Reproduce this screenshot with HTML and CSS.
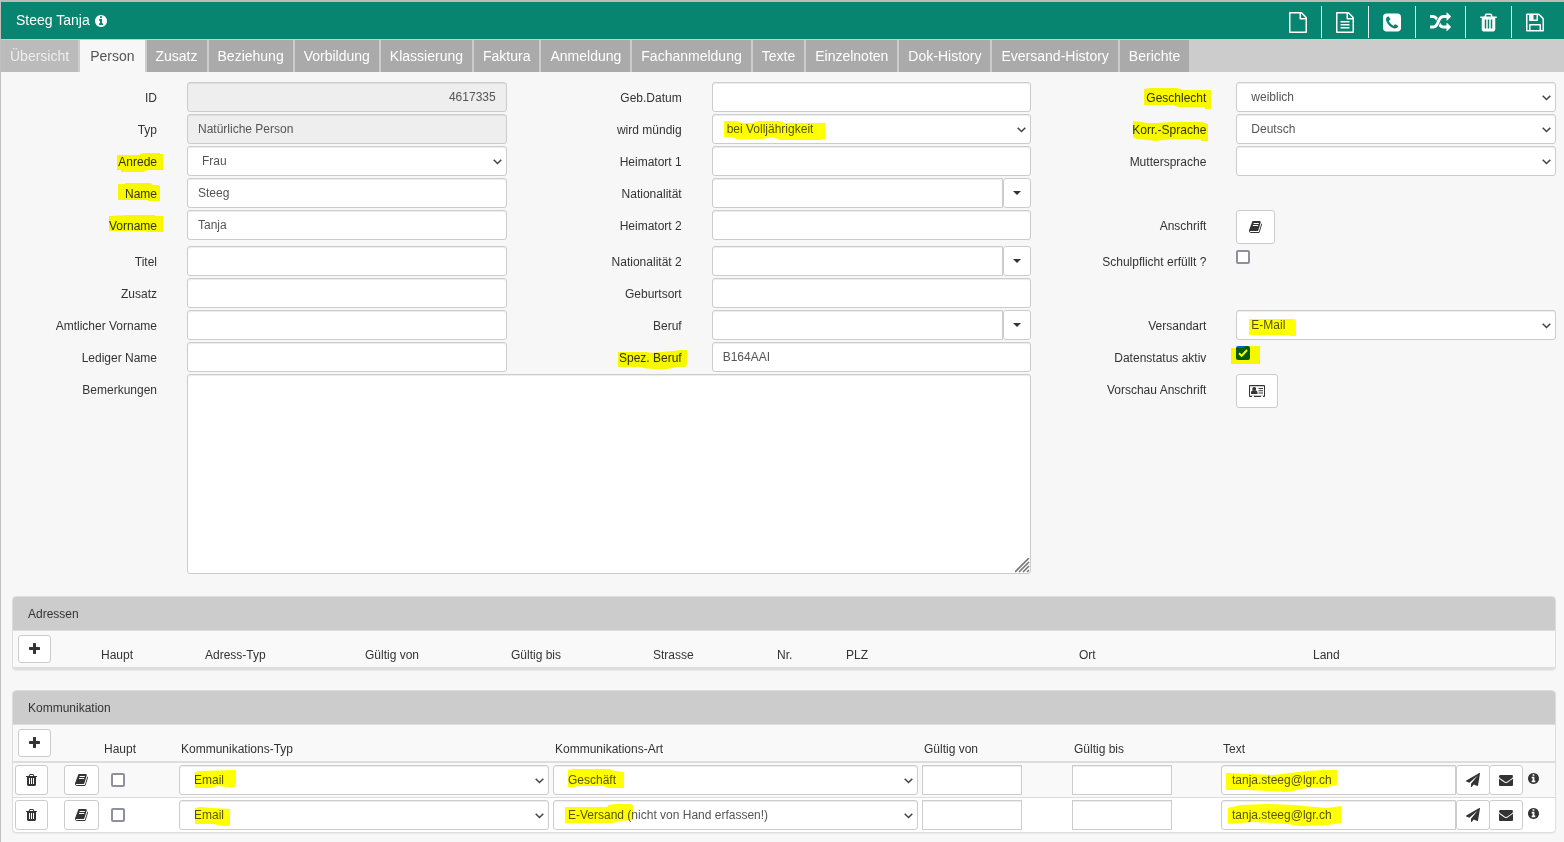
FILE: index.html
```html
<!DOCTYPE html>
<html lang="de">
<head>
    <meta charset="UTF-8">
    <meta name="viewport" content="width=device-width, initial-scale=1.0">
    <title>Steeg Tanja</title>
    <link rel="stylesheet" href="styles.css">
</head>
<body>

    <!-- Icon sprite -->
    <svg class="sprite" aria-hidden="true">
        <symbol id="i-file" viewBox="128 0 1536 1792"><path d="M1596 380q28 28 48 76t20 88v1152q0 40-28 68t-68 28h-1344q-40 0-68-28t-28-68v-1600q0-40 28-68t68-28h896q40 0 88 20t76 48zm-444-244v376h376q-10-29-22-41l-313-313q-12-12-41-22zm384 1528v-1024h-416q-40 0-68-28t-28-68v-416h-768v1536h1280z"/></symbol>
        <symbol id="i-file-text" viewBox="128 0 1536 1792"><path d="M1596 380q28 28 48 76t20 88v1152q0 40-28 68t-68 28h-1344q-40 0-68-28t-28-68v-1600q0-40 28-68t68-28h896q40 0 88 20t76 48zm-444-244v376h376q-10-29-22-41l-313-313q-12-12-41-22zm384 1528v-1024h-416q-40 0-68-28t-28-68v-416h-768v1536h1280zm-1024-864q0-14 9-23t23-9h704q14 0 23 9t9 23v64q0 14-9 23t-23 9h-704q-14 0-23-9t-9-23v-64zm736 224q14 0 23 9t9 23v64q0 14-9 23t-23 9h-704q-14 0-23-9t-9-23v-64q0-14 9-23t23-9h704zm0 256q14 0 23 9t9 23v64q0 14-9 23t-23 9h-704q-14 0-23-9t-9-23v-64q0-14 9-23t23-9h704z"/></symbol>
        <symbol id="i-phone" viewBox="128 0 1536 1792"><path d="M1408 1193q0-11-2-16t-18-16.5-40.5-25-47.5-26.5-45.5-25-28.5-15q-5-3-19-13t-25-15-21-5q-15 0-36.5 20.5t-39.5 45-38.5 45-33.5 20.5q-7 0-16.5-3.5t-15.5-6.5-17-9.5-14-8.5q-99-55-170-126.5t-127-170.5q-2-3-8.5-14t-9.5-17-6.5-15.5-3.5-16.5q0-13 20.5-33.5t45-38.5 45-39.5 20.5-36.5q0-10-5-21t-15-25-13-19q-3-6-15-28.5t-25-45.5-26.5-47.5-25-40.5-16.5-18-16-2q-48 0-101 22-46 21-80 94.5t-34 130.5q0 16 2.5 34t5 30.5 9 33 10 29.5 12.5 33 11 30q60 164 216.5 320.5t320.5 216.5q6 2 30 11t33 12.5 29.5 10 33 9 30.5 5 34 2.5q57 0 130.5-34t94.5-80q22-53 22-101zm256-777v960q0 119-84.5 203.5t-203.5 84.5h-960q-119 0-203.5-84.5t-84.5-203.5v-960q0-119 84.5-203.5t203.5-84.5h960q119 0 203.5 84.5t84.5 203.5z"/></symbol>
        <symbol id="i-random" viewBox="0 0 1792 1792"><path d="M666 481q-60 92-137 273-22-45-37-72.5t-40.5-63.5-51-56.5-63-35-81.5-14.5h-224q-14 0-23-9t-9-23v-192q0-14 9-23t23-9h224q250 0 410 225zm1126 799q0 14-9 23l-320 320q-9 9-23 9-13 0-22.5-9.5t-9.5-22.5v-192q-32 0-85 .5t-81 1-73-1-71-5-64-10.5-63-18.5-58-28.5-59-40-55-53.5-56-69.5q59-93 136-273 22 45 37 72.5t40.5 63.5 51 56.5 63 35 81.5 14.5h256v-192q0-14 9-23t23-9q12 0 24 10l319 319q9 9 9 23zm0-896q0 14-9 23l-320 320q-9 9-23 9-13 0-22.5-9.5t-9.5-22.5v-192h-256q-48 0-87 15t-69 45-51 61.5-45 77.5q-32 62-78 171-29 66-49.5 111t-54 105-64 100-74 83-90 68.5-106.5 42-128 16.5h-224q-14 0-23-9t-9-23v-192q0-14 9-23t23-9h224q48 0 87-15t69-45 51-61.5 45-77.5q32-62 78-171 29-66 49.5-111t54-105 64-100 74-83 90-68.5 106.5-42 128-16.5h256v-192q0-14 9-23t23-9q12 0 24 10l319 319q9 9 9 23z"/></symbol>
        <symbol id="i-trash" viewBox="192 0 1408 1792"><path d="M704 1376v-704q0-14-9-23t-23-9h-64q-14 0-23 9t-9 23v704q0 14 9 23t23 9h64q14 0 23-9t9-23zm256 0v-704q0-14-9-23t-23-9h-64q-14 0-23 9t-9 23v704q0 14 9 23t23 9h64q14 0 23-9t9-23zm256 0v-704q0-14-9-23t-23-9h-64q-14 0-23 9t-9 23v704q0 14 9 23t23 9h64q14 0 23-9t9-23zm-544-992h448l-48-117q-7-9-17-11h-317q-10 2-17 11zm928 32v64q0 14-9 23t-23 9h-96v948q0 83-47 143.5t-113 60.5h-832q-66 0-113-58.5t-47-141.5v-952h-96q-14 0-23-9t-9-23v-64q0-14 9-23t23-9h309l70-167q15-37 54-63t79-26h320q40 0 79 26t54 63l70 167h309q14 0 23 9t9 23z"/></symbol>
        <symbol id="i-save" viewBox="128 0 1536 1792"><path d="M512 1536h768v-384h-768v384zm896 0h128v-896q0-14-10-38.5t-20-34.5l-281-281q-10-10-34-20t-39-10v416q0 40-28 68t-68 28h-576q-40 0-68-28t-28-68v-416h-128v1280h128v-416q0-40 28-68t68-28h832q40 0 68 28t28 68v416zm-384-928v-320q0-13-9.5-22.5t-22.5-9.5h-192q-13 0-22.5 9.5t-9.5 22.5v320q0 13 9.5 22.5t22.5 9.5h192q13 0 22.5-9.5t9.5-22.5zm640 32v928q0 40-28 68t-68 28h-1344q-40 0-68-28t-28-68v-1344q0-40 28-68t68-28h928q40 0 88 20t76 48l280 280q28 28 48 76t20 88z"/></symbol>
        <symbol id="i-info" viewBox="128 0 1536 1792"><path d="M1152 1376v-160q0-14-9-23t-23-9h-96v-512q0-14-9-23t-23-9h-320q-14 0-23 9t-9 23v160q0 14 9 23t23 9h96v320h-96q-14 0-23 9t-9 23v160q0 14 9 23t23 9h448q14 0 23-9t9-23zm-128-896v-160q0-14-9-23t-23-9h-192q-14 0-23 9t-9 23v160q0 14 9 23t23 9h192q14 0 23-9t9-23zm640 416q0 209-103 385.5t-279.5 279.5-385.5 103-385.5-103-279.5-279.5-103-385.5 103-385.5 279.5-279.5 385.5-103 385.5 103 279.5 279.5 103 385.5z"/></symbol>
        <symbol id="i-plus" viewBox="192 0 1408 1792"><path d="M1600 736v192q0 40-28 68t-68 28h-416v416q0 40-28 68t-68 28h-192q-40 0-68-28t-28-68v-416h-416q-40 0-68-28t-28-68v-192q0-40 28-68t68-28h416v-416q0-40 28-68t68-28h192q40 0 68 28t28 68v416h416q40 0 68 28t28 68z"/></symbol>
        <symbol id="i-book" viewBox="64 0 1664 1792"><path d="M1703 478q40 57 18 129l-275 906q-19 64-76.5 107.5t-122.5 43.5h-923q-77 0-148.5-53.5t-99.5-131.5q-24-67-2-127 0-4 3-27t4-37q1-8-3-21.5t-3-19.5q2-11 8-21t16.5-23.5 16.5-23.5q23-38 45-91.5t30-91.5q3-10 .5-30t-.5-28q3-11 17-28t17-23q21-36 42-92t25-90q1-9-2.5-32t.5-28q4-13 22-30.5t22-22.5q19-26 42.5-84.5t27.5-96.5q1-8-3-25.5t-2-26.5q2-8 9-18t18-23 17-21q8-12 16.5-30.5t15-35 16-36 19.5-32 26.5-23.5 36-11.5 47.5 5.5l-1 3q38-9 51-9h761q74 0 114 56t18 130l-274 906q-36 119-71.5 153.5t-128.5 34.5h-869q-27 0-38 15-11 16-1 43 24 70 144 70h923q29 0 56-15.5t35-41.5l300-987q7-22 5-57 38 15 59 43zm-1064 2q-4 13 2 22.5t20 9.5h608q13 0 25.5-9.5t16.5-22.5l21-64q4-13-2-22.5t-20-9.5h-608q-13 0-25.5 9.5t-16.5 22.5zm-83 256q-4 13 2 22.5t20 9.5h608q13 0 25.5-9.5t16.5-22.5l21-64q4-13-2-22.5t-20-9.5h-608q-13 0-25.5 9.5t-16.5 22.5z"/></symbol>
        <symbol id="i-plane" viewBox="0 0 1792 1792"><path d="M1764 11q33 24 27 64l-256 1536q-5 29-32 45-14 8-31 8-11 0-24-5l-453-185-242 295q-18 23-49 23-13 0-22-4-19-7-30.5-23.5t-11.5-36.5v-349l864-1059-1069 925-395-162q-37-14-40-55-2-40 32-59l1664-960q15-9 32-9 20 0 36 11z"/></symbol>
        <symbol id="i-envelope" viewBox="0 0 1792 1792"><path d="M1792 710v794q0 66-47 113t-113 47h-1472q-66 0-113-47t-47-113v-794q44 49 101 87 362 246 497 345 57 42 92.5 65.5t94.5 48 110 24.5h2q51 0 110-24.5t94.5-48 92.5-65.5q170-123 498-345 57-39 100-87zm0-294q0 79-49 151t-122 123q-376 261-468 325-10 7-42.5 31t-54 38.5-52 32.5-57.5 27-50 9h-2q-23 0-50-9t-57.5-27-52-32.5-54-38.5-42.5-31q-91-64-262-182.5t-205-142.5q-62-42-117-115.5t-55-136.5q0-78 41.5-130t118.5-52h1472q65 0 112.5 47t47.5 113z"/></symbol>
        <symbol id="i-card" viewBox="0 0 16 14">
            <path fill-rule="evenodd" d="M1 1h14q1 0 1 1v10q0 1-1 1h-1v-1h-2v1H5v-1H3v1H1q-1 0-1-1V2q0-1 1-1zM1 2.200v9.600h14V2.200z"/>
            <path d="M2 10V8.600q0-2 1.600-2h.400q1.200.800 2.400 0H6.800q1.700 0 1.700 2V10zM9.500 4H14v1H9.500zM9.500 6.300H14v1H9.500zM9.500 8.600H14v1H9.500z"/>
            <circle cx="5.200" cy="5" r="2"/>
        </symbol>
    </svg>

    <div class="page">
        <header class="titlebar">
            <h1>Steeg Tanja <svg class="icon"><use href="#i-info"/></svg></h1>
            <div class="toolbar">
                <button type="button" aria-label="Neu"><svg class="icon-tool"><use href="#i-file"/></svg></button>
                <button type="button" aria-label="Dokument"><svg class="icon-tool"><use href="#i-file-text"/></svg></button>
                <button type="button" aria-label="Telefon"><svg class="icon-tool"><use href="#i-phone"/></svg></button>
                <button type="button" aria-label="Wechseln"><svg class="icon-tool wide"><use href="#i-random"/></svg></button>
                <button type="button" aria-label="Löschen"><svg class="icon-tool narrow"><use href="#i-trash"/></svg></button>
                <button type="button" aria-label="Speichern"><svg class="icon-tool"><use href="#i-save"/></svg></button>
            </div>
        </header>

        <nav class="tabs">
            <a href="#" class="disabled">Übersicht</a>
            <a href="#" class="active">Person</a>
            <a href="#">Zusatz</a>
            <a href="#">Beziehung</a>
            <a href="#">Vorbildung</a>
            <a href="#">Klassierung</a>
            <a href="#">Faktura</a>
            <a href="#">Anmeldung</a>
            <a href="#">Fachanmeldung</a>
            <a href="#">Texte</a>
            <a href="#">Einzelnoten</a>
            <a href="#">Dok-History</a>
            <a href="#">Eversand-History</a>
            <a href="#">Berichte</a>
        </nav>

        <main>
            <form class="person">
                <label class="l1" for="id">ID</label>
                <div class="field"><input class="control number" id="id" type="text" value="4617335" readonly></div>
                <label for="geb">Geb.Datum</label>
                <div class="field"><input class="control" id="geb" type="text"></div>
                <label for="geschlecht">Geschlecht<svg class="marker"><path d="M83 7L89 6H116L122 8H150V27H144V25H117L112 23H83z"/></svg></label>
                <div class="field"><select class="control" id="geschlecht"><option>weiblich</option></select></div>

                <label class="l1" for="typ">Typ</label>
                <div class="field"><input class="control" id="typ" type="text" value="Natürliche Person" readonly></div>
                <label for="muendig">wird mündig</label>
                <div class="field"><select class="control" id="muendig"><option>bei Volljährigkeit</option></select><svg class="marker"><path d="M12 7H24L31 9H41L47 7H68L73 9H113V25L108 26H68L60 23L51 25H25L19 23H12z"/></svg></div>
                <label for="sprache">Korr.-Sprache<svg class="marker"><path d="M72 7L80 8L87 9H96L112 8H141L147 10V27H140V25H112L94 27L87 26L76 25L72 23z"/></svg></label>
                <div class="field"><select class="control" id="sprache"><option>Deutsch</option></select></div>

                <label class="l1" for="anrede">Anrede<svg class="marker"><path d="M105 9H128V8L132 7H148V8H151V24H137L132 25V26H109V24H105z"/></svg></label>
                <div class="field"><select class="control" id="anrede"><option>Frau</option></select></div>
                <label for="heimat1">Heimatort 1</label>
                <div class="field"><input class="control" id="heimat1" type="text"></div>
                <label for="mutter">Muttersprache</label>
                <div class="field"><select class="control" id="mutter"><option></option></select></div>

                <label class="l1" for="name">Name<svg class="marker"><path d="M106 6H113V5H139L141 7H146L148 8V23H136V22H106z"/></svg></label>
                <div class="field"><input class="control" id="name" type="text" value="Steeg"></div>
                <label for="nat1">Nationalität</label>
                <div class="field combo"><input class="control" id="nat1" type="text"><button type="button" class="btn" aria-label="Nationalität wählen"><span class="caret"></span></button></div>

                <label class="l1" for="vorname">Vorname<svg class="marker"><path d="M97 6L115 5H143V6H151V22H137L133 21H97z"/></svg></label>
                <div class="field"><input class="control" id="vorname" type="text" value="Tanja"></div>
                <label for="heimat2">Heimatort 2</label>
                <div class="field"><input class="control" id="heimat2" type="text"></div>
                <label for="anschrift">Anschrift</label>
                <div class="field"><button type="button" class="btn big" id="anschrift"><svg class="icon icon-book"><use href="#i-book"/></svg></button></div>

                <label class="l1" for="titel">Titel</label>
                <div class="field"><input class="control" id="titel" type="text"></div>
                <label for="nat2">Nationalität 2</label>
                <div class="field combo"><input class="control" id="nat2" type="text"><button type="button" class="btn" aria-label="Nationalität 2 wählen"><span class="caret"></span></button></div>
                <label for="schulpflicht">Schulpflicht erfüllt ?</label>
                <div class="field check"><input type="checkbox" id="schulpflicht"></div>

                <label class="l1" for="zusatz">Zusatz</label>
                <div class="field"><input class="control" id="zusatz" type="text"></div>
                <label for="geburtsort">Geburtsort</label>
                <div class="field"><input class="control" id="geburtsort" type="text"></div>

                <label class="l1" for="amtlich">Amtlicher Vorname</label>
                <div class="field"><input class="control" id="amtlich" type="text"></div>
                <label for="beruf">Beruf</label>
                <div class="field combo"><input class="control" id="beruf" type="text"><button type="button" class="btn" aria-label="Beruf wählen"><span class="caret"></span></button></div>
                <label for="versand">Versandart</label>
                <div class="field"><select class="control" id="versand"><option>E-Mail</option></select><svg class="marker"><path d="M13 9H58L60 11V26H54L52 25H13z"/></svg></div>

                <label class="l1" for="ledig">Lediger Name</label>
                <div class="field"><input class="control" id="ledig" type="text"></div>
                <label for="spez">Spez. Beruf<svg class="marker"><path d="M81 10H111L113 11L136 9L143 8H150V23L148 25H140L130 27H116L106 26V25H81z"/></svg></label>
                <div class="field"><input class="control" id="spez" type="text" value="B164AAI"></div>
                <label for="aktiv">Datenstatus aktiv</label>
                <div class="field check"><input type="checkbox" id="aktiv" checked><svg class="marker"><path d="M-5 6H7L9 4H24V22H-5z"/></svg></div>

                <label class="l1" for="bemerkungen">Bemerkungen</label>
                <div class="field notes"><textarea class="control" id="bemerkungen"></textarea></div>
                <label for="vorschau">Vorschau Anschrift</label>
                <div class="field"><button type="button" class="btn big" id="vorschau"><svg class="icon icon-card"><use href="#i-card"/></svg></button></div>
            </form>

            <section class="panel">
                <h2>Adressen</h2>
                <table class="addresses">
                    <colgroup><col><col><col><col><col><col><col><col><col><col></colgroup>
                    <thead>
                        <tr>
                            <th><button type="button" class="btn add" aria-label="Adresse hinzufügen"><svg class="icon icon-small"><use href="#i-plus"/></svg></button></th>
                            <th>Haupt</th>
                            <th>Adress-Typ</th>
                            <th>Gültig von</th>
                            <th>Gültig bis</th>
                            <th>Strasse</th>
                            <th>Nr.</th>
                            <th>PLZ</th>
                            <th>Ort</th>
                            <th>Land</th>
                        </tr>
                    </thead>
                </table>
            </section>

            <section class="panel">
                <h2>Kommunikation</h2>
                <table class="contacts">
                    <colgroup><col><col><col><col><col><col><col><col></colgroup>
                    <thead>
                        <tr>
                            <th><button type="button" class="btn add" aria-label="Kommunikation hinzufügen"><svg class="icon icon-small"><use href="#i-plus"/></svg></button></th>
                            <th></th>
                            <th>Haupt</th>
                            <th>Kommunikations-Typ</th>
                            <th>Kommunikations-Art</th>
                            <th>Gültig von</th>
                            <th>Gültig bis</th>
                            <th>Text</th>
                        </tr>
                    </thead>
                    <tbody>
                        <tr>
                            <td><button type="button" class="btn" aria-label="Löschen"><svg class="icon icon-small"><use href="#i-trash"/></svg></button></td>
                            <td><button type="button" class="btn" aria-label="Journal"><svg class="icon icon-book"><use href="#i-book"/></svg></button></td>
                            <td class="main"><input type="checkbox" aria-label="Haupt"></td>
                            <td><div class="field"><select class="control" aria-label="Kommunikations-Typ"><option>Email</option></select><svg class="marker"><path d="M16 7L21 6L57 5V21L54 22H49L38 21L32 23H16z"/></svg></div></td>
                            <td><div class="field"><select class="control" aria-label="Kommunikations-Art"><option>Geschäft</option></select><svg class="marker"><path d="M15 5L20 4H56L62 6L71 7V23H56L51 21H27L20 22H15z"/></svg></div></td>
                            <td><input class="control date" type="text" aria-label="Gültig von"></td>
                            <td><input class="control date" type="text" aria-label="Gültig bis"></td>
                            <td>
                                <div class="field combo contact">
                                    <input class="control" type="text" value="tanja.steeg@lgr.ch" aria-label="Text">
                                    <button type="button" class="btn" aria-label="Senden"><svg class="icon"><use href="#i-plane"/></svg></button>
                                    <button type="button" class="btn" aria-label="E-Mail"><svg class="icon"><use href="#i-envelope"/></svg></button>
                                    <svg class="icon row-info"><use href="#i-info"/></svg>
                                    <svg class="marker"><path d="M5 8L32 9L52 10L86 6L102 5H116V20L106 22L86 23L66 27L46 26L26 25H5z"/></svg>
                                </div>
                            </td>
                        </tr>
                        <tr>
                            <td><button type="button" class="btn" aria-label="Löschen"><svg class="icon icon-small"><use href="#i-trash"/></svg></button></td>
                            <td><button type="button" class="btn" aria-label="Journal"><svg class="icon icon-book"><use href="#i-book"/></svg></button></td>
                            <td class="main"><input type="checkbox" aria-label="Haupt"></td>
                            <td><div class="field"><select class="control" aria-label="Kommunikations-Typ"><option>Email</option></select><svg class="marker"><path d="M16 8L21 7L34 8L51 9V25L49 26H44L34 24H16z"/></svg></div></td>
                            <td><div class="field"><select class="control" aria-label="Kommunikations-Art"><option>E-Versand (nicht von Hand erfassen!)</option></select><svg class="marker"><path d="M12 7H54L55 5L62 4H77L80 5V20L67 21L60 23H12z"/></svg></div></td>
                            <td><input class="control date" type="text" aria-label="Gültig von"></td>
                            <td><input class="control date" type="text" aria-label="Gültig bis"></td>
                            <td>
                                <div class="field combo contact">
                                    <input class="control" type="text" value="tanja.steeg@lgr.ch" aria-label="Text">
                                    <button type="button" class="btn" aria-label="Senden"><svg class="icon"><use href="#i-plane"/></svg></button>
                                    <button type="button" class="btn" aria-label="E-Mail"><svg class="icon"><use href="#i-envelope"/></svg></button>
                                    <svg class="icon row-info"><use href="#i-info"/></svg>
                                    <svg class="marker"><path d="M7 8L19 5L46 4L72 5L106 8L120 6V23L106 25L79 26L66 24L32 22L7 24z"/></svg>
                                </div>
                            </td>
                        </tr>
                    </tbody>
                </table>
            </section>
        </main>
    </div>

</body>
</html>
```
FILE: styles.css
```css
* {
    box-sizing: border-box;
}
body {
    margin: 0;
    background-color: #f7f7f7;
    color: #333;
    font-family: "Liberation Sans", Arial, Helvetica, sans-serif;
    font-size: 12px;
    line-height: 17px;
}
input, select, textarea, button {
    font: inherit;
}
.sprite {
    display: none;
}
.page {
    min-height: 100vh;
    border-left: 1px solid #c0c0c0;
    border-top: 2px solid #bbb;
}

/* Title bar */
.titlebar {
    display: flex;
    justify-content: space-between;
    height: 38px;
    padding: 0 6px 0 15px;
    background-color: #088570;
    border-bottom: 1px solid #ccc;
    color: #fff;
}
.titlebar h1 {
    display: flex;
    align-items: center;
    gap: 4px;
    margin: 0;
    font-size: 14px;
    font-weight: normal;
}
.toolbar {
    display: flex;
    padding-top: 4px;
}
.toolbar button {
    display: flex;
    align-items: center;
    height: 32px;
    padding: 0 14px;
    border: 0;
    background: none;
    color: #fff;
    cursor: pointer;
}
.toolbar button + button {
    border-left: 1px solid #e6f2f0;
}
.icon-tool {
    width: 18px;
    height: 21px;
    fill: currentColor;
}
.icon-tool.wide {
    width: 21px;
}
.icon-tool.narrow {
    width: 17px;
}
.icon {
    display: block;
    width: 14px;
    height: 14px;
    fill: currentColor;
}
.icon-small {
    width: 11px;
}
.icon-book {
    width: 13px;
}
.icon-card {
    width: 16px;
}

/* Tabs */
.tabs {
    display: flex;
    gap: 2px;
    height: 32px;
    background-color: #ccc;
    font-size: 14px;
    line-height: 32px;
}
.tabs a {
    padding: 0 9px;
    background-color: #aaa;
    color: #fff;
    text-decoration: none;
    white-space: nowrap;
}
.tabs a.disabled {
    background-color: #bbb;
    color: #eee;
}
.tabs a.active {
    padding: 0 10px;
    background-color: #f7f7f7;
    color: #555;
}

main {
    padding: 10px 8px 0 11px;
}

/* Person form */
.person {
    display: grid;
    grid-template-columns: repeat(3, 145px minmax(0, 1fr));
    gap: 2px 30px;
    align-items: start;
    margin-bottom: 22px;
}
.person label {
    position: relative;
    padding-top: 8px;
    text-align: right;
}
.person .l1 {
    grid-column: 1;
}
.field {
    position: relative;
}
.notes {
    grid-column: span 3;
}
.control {
    display: block;
    width: 100%;
    height: 30px;
    margin: 0;
    padding: 0 10px;
    border: 1px solid #ccc;
    border-radius: 3px;
    background-color: #fff;
    box-shadow: inset 0 1px 1px rgba(0, 0, 0, 0.075);
    color: #555;
}
.control[readonly] {
    background-color: #eee;
}
.control.number {
    text-align: right;
}
select.control {
    appearance: none;
    padding: 0 24px 0 14px;
    background-image: url("data:image/svg+xml,%3Csvg xmlns='http://www.w3.org/2000/svg' width='9' height='7'%3E%3Cpath d='M.7 1.700l3.800 3.800L8.300 1.700' fill='none' stroke='%23444' stroke-width='1.500'/%3E%3C/svg%3E");
    background-repeat: no-repeat;
    background-position: right 4px center;
}
textarea.control {
    height: 200px;
    padding: 5px 10px;
    resize: both;
}
textarea::-webkit-resizer {
    background: url("data:image/svg+xml,%3Csvg xmlns='http://www.w3.org/2000/svg' width='15' height='15'%3E%3Cpath d='M0 14L14 0M4 14L14 4M8 14L14 8M12 14L14 12' stroke='%23777' stroke-width='1.600'/%3E%3C/svg%3E") no-repeat right bottom;
}
input[type="checkbox"] {
    appearance: none;
    display: block;
    width: 14px;
    height: 14px;
    margin: 0;
    border: 2px solid #8f8f9d;
    border-radius: 2px;
    background-color: #fff;
}
input[type="checkbox"]:checked {
    border-color: #0060df;
    background: #0060df url("data:image/svg+xml,%3Csvg xmlns='http://www.w3.org/2000/svg' width='10' height='10'%3E%3Cpath d='M1 5.200l2.700 2.700L9 2' fill='none' stroke='white' stroke-width='2'/%3E%3C/svg%3E") no-repeat center;
}
.check {
    padding-top: 4px;
}
.btn {
    display: flex;
    align-items: center;
    justify-content: center;
    height: 30px;
    padding: 0 10px;
    border: 1px solid #ccc;
    border-radius: 3px;
    background-color: #fff;
    color: #333;
    cursor: pointer;
}
.btn.big {
    height: 34px;
    padding: 0 12px;
}
.btn.add {
    height: 28px;
}
.combo {
    display: flex;
}
.combo .control {
    flex: 1;
    min-width: 0;
    border-top-right-radius: 0;
    border-bottom-right-radius: 0;
}
.combo .btn {
    width: 28px;
    padding: 0;
}
.caret {
    border: 4px solid transparent;
    border-top-color: #333;
    border-bottom: 0;
}

/* Yellow text marker, drawn over the label or field it sits in */
.marker {
    position: absolute;
    top: 0;
    left: 0;
    width: 145px;
    height: 30px;
    overflow: visible;
    fill: #ff0;
    mix-blend-mode: multiply;
    pointer-events: none;
}

/* Panels */
.panel {
    margin-bottom: 20px;
    border: 1px solid #ddd;
    border-radius: 4px;
    background-color: #fff;
    box-shadow: 0 1px 1px rgba(0, 0, 0, 0.05);
}
.panel:last-child {
    margin-bottom: 0;
}
.panel h2 {
    margin: 0;
    padding: 9px 15px 7px;
    border-bottom: 1px solid #ddd;
    border-radius: 3px 3px 0 0;
    background-color: #ccc;
    font-size: 12px;
    font-weight: normal;
}
.panel table {
    width: 100%;
    table-layout: fixed;
    border-spacing: 0;
}
.panel th {
    height: 38px;
    padding: 4px 4px 3px;
    border-bottom: 2px solid #ddd;
    background-color: #f9f9f9;
    font-weight: normal;
    text-align: left;
    vertical-align: bottom;
}
.panel th:first-child {
    padding-left: 5px;
    vertical-align: top;
}
.panel td {
    padding: 2px;
}
.panel tbody tr:nth-child(odd) {
    background-color: #f9f9f9;
}
.panel tbody tr + tr td {
    border-top: 1px solid #ddd;
}
.addresses col:nth-child(1) { width: 84px; }
.addresses col:nth-child(2) { width: 104px; }
.addresses col:nth-child(3) { width: 160px; }
.addresses col:nth-child(4) { width: 146px; }
.addresses col:nth-child(5) { width: 142px; }
.addresses col:nth-child(6) { width: 124px; }
.addresses col:nth-child(7) { width: 69px; }
.addresses col:nth-child(8) { width: 233px; }
.addresses col:nth-child(9) { width: 234px; }

.contacts col:nth-child(1) { width: 49px; }
.contacts col:nth-child(2) { width: 38px; }
.contacts col:nth-child(3) { width: 77px; }
.contacts col:nth-child(4) { width: 374px; }
.contacts col:nth-child(5) { width: 369px; }
.contacts col:nth-child(6) { width: 150px; }
.contacts col:nth-child(7) { width: 149px; }

.contacts .main {
    padding-left: 11px;
}
.date {
    width: 100px;
    border-radius: 0;
}
.contact .btn {
    flex: none;
    width: 34px;
    padding: 0;
}
.contact .btn + .btn {
    margin-left: -1px;
}
.row-info {
    width: 11px;
    height: 13px;
    margin: 7px 14px 0 5px;
}
```
